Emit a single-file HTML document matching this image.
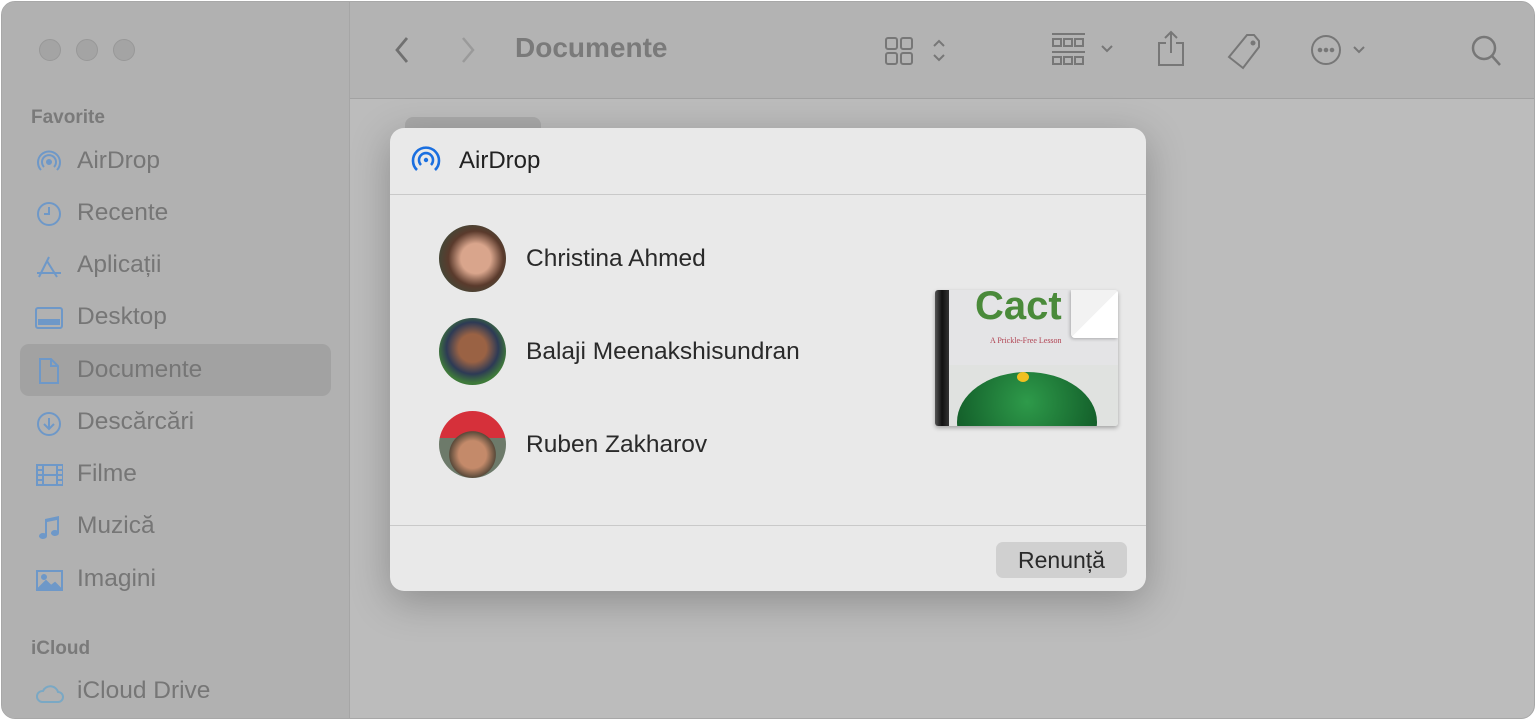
<!DOCTYPE html>
<html><head><meta charset="utf-8"><style>
*{margin:0;padding:0;box-sizing:border-box}
body{width:1536px;height:720px;background:#fff;font-family:"Liberation Sans",sans-serif;position:relative;overflow:hidden}
.win{position:absolute;left:1px;top:1px;width:1534px;height:718px;border-radius:14px;background:#bcbcbc;overflow:hidden;border:1px solid #a8a8a8}
.side{position:absolute;left:0;top:0;width:348px;height:100%;background:#b1b1b1;border-right:1px solid #a6a6a6}
.tb{position:absolute;left:348px;top:0;right:0;height:97px;background:#b3b3b3;border-bottom:1px solid #a2a2a2}
.dot{position:absolute;top:37px;width:22px;height:22px;border-radius:50%;background:#a4a4a4;border:1px solid #989898}
.sh{position:absolute;left:29px;font-size:19px;font-weight:bold;color:#7a7a7a}
.it{position:absolute;left:75px;font-size:24.5px;color:#767676}
.ic{position:absolute;left:33px}
.sel{position:absolute;left:18px;top:342px;width:311px;height:52px;border-radius:9px;background:#a2a2a2}
.dlg{position:absolute;left:390px;top:128px;width:756px;height:463px;background:#e9e9e9;border-radius:14px;box-shadow:0 10px 40px rgba(0,0,0,.25)}
.nm{position:absolute;left:136px;font-size:24.5px;color:#2a2a2a}
.av{position:absolute;left:49px;width:67px;height:67px;border-radius:50%}
</style></head><body>
<div class="win">
<div class="side">
<div class="dot" style="left:37px"></div><div class="dot" style="left:74px"></div><div class="dot" style="left:111px"></div>
<div class="sh" style="top:105px">Favorite</div>
<div class="sel"></div>
<svg class="ic" style="top:146px" width="28" height="28" viewBox="0 0 28 28" fill="none" stroke="#6e98c8" stroke-width="2"><circle cx="14" cy="14" r="2" fill="#6e98c8"/><path d="M9 19a7 7 0 1 1 10 0M6 22a11 11 0 1 1 16 0"/></svg>
<div class="it" style="top:145px">AirDrop</div>
<svg class="ic" style="top:198px" width="28" height="28" viewBox="0 0 28 28" fill="none" stroke="#6e98c8" stroke-width="2"><circle cx="14" cy="14" r="11"/><path d="M14 7v7h-5"/></svg>
<div class="it" style="top:197px">Recente</div>
<svg class="ic" style="top:251px" width="28" height="28" viewBox="0 0 28 28" fill="none" stroke="#6e98c8" stroke-width="2"><path d="M14 4l-10 20M12 8l10 16M2 20h24"/></svg>
<div class="it" style="top:249px">Aplicații</div>
<svg class="ic" style="top:303px" width="28" height="28" viewBox="0 0 28 28" fill="none" stroke="#6e98c8" stroke-width="2"><rect x="1" y="3" width="26" height="20" rx="2"/><rect x="4" y="15" width="20" height="4" fill="#6e98c8"/></svg>
<div class="it" style="top:301px">Desktop</div>
<svg class="ic" style="top:355px" width="28" height="28" viewBox="0 0 28 28" fill="none" stroke="#6e98c8" stroke-width="2"><path d="M5 2h11l7 7v17H5zM16 2v7h7"/></svg>
<div class="it" style="top:354px">Documente</div>
<svg class="ic" style="top:408px" width="28" height="28" viewBox="0 0 28 28" fill="none" stroke="#6e98c8" stroke-width="2"><circle cx="14" cy="14" r="11"/><path d="M14 8v11M9 14l5 5 5-5"/></svg>
<div class="it" style="top:406px">Descărcări</div>
<svg class="ic" style="top:460px" width="28" height="28" viewBox="0 0 28 28" fill="none" stroke="#6e98c8" stroke-width="2"><rect x="2" y="3" width="26" height="20"/><path d="M8 3v20M22 3v20M8 13h14M2 8h6M2 13h6M2 18h6M22 8h6M22 13h6M22 18h6"/></svg>
<div class="it" style="top:458px">Filme</div>
<svg class="ic" style="top:512px" width="28" height="28" viewBox="0 0 28 28" fill="#6e98c8"><path d="M10 5l14-3v17a4 3 0 1 1-2-2.6V6l-10 2v14a4 3 0 1 1-2-2.6z"/></svg>
<div class="it" style="top:510px">Muzică</div>
<svg class="ic" style="top:565px" width="28" height="28" viewBox="0 0 28 28" fill="none" stroke="#6e98c8" stroke-width="2"><rect x="2" y="4" width="25" height="19"/><path d="M3 22l8-8 5 5 4-3 6 6z" fill="#6e98c8"/><circle cx="9" cy="10" r="2" fill="#6e98c8"/></svg>
<div class="it" style="top:563px">Imagini</div>
<div class="sh" style="top:636px">iCloud</div>
<svg class="ic" style="top:680px" width="30" height="24" viewBox="0 0 30 24" fill="none" stroke="#7aa8c4" stroke-width="2"><path d="M7 20h16a5 5 0 0 0 0-10 8 8 0 0 0-15-1A5.5 5.5 0 0 0 7 20z"/></svg>
<div class="it" style="top:675px">iCloud Drive</div>
</div>
<div class="tb">
<svg style="position:absolute;left:42px;top:34px" width="20" height="28" viewBox="0 0 20 28" fill="none" stroke="#707070" stroke-width="2.8"><path d="M15 2L5 14l10 12"/></svg>
<svg style="position:absolute;left:108px;top:34px" width="20" height="28" viewBox="0 0 20 28" fill="none" stroke="#9a9a9a" stroke-width="2.5"><path d="M5 2l10 12L5 26"/></svg>
<div style="position:absolute;left:165px;top:30px;font-size:28px;font-weight:bold;color:#7a7a7a">Documente</div>
<svg style="position:absolute;left:534px;top:34px" width="72" height="30" viewBox="0 0 72 30" fill="none" stroke="#777" stroke-width="2"><rect x="2" y="2" width="11" height="11" rx="2"/><rect x="17" y="2" width="11" height="11" rx="2"/><rect x="2" y="17" width="11" height="11" rx="2"/><rect x="17" y="17" width="11" height="11" rx="2"/><path d="M50 10l5-5 5 5M50 19l5 5 5-5"/></svg>
<svg style="position:absolute;left:700px;top:30px" width="70" height="36" viewBox="0 0 70 36" fill="none" stroke="#777" stroke-width="2"><path d="M2 2h33M2 20h33"/><rect x="3" y="7" width="8" height="7"/><rect x="14" y="7" width="8" height="7"/><rect x="25" y="7" width="8" height="7"/><rect x="3" y="25" width="8" height="7"/><rect x="14" y="25" width="8" height="7"/><rect x="25" y="25" width="8" height="7"/><path d="M52 14l5 5 5-5"/></svg>
<svg style="position:absolute;left:806px;top:27px" width="30" height="38" viewBox="0 0 30 38" fill="none" stroke="#777" stroke-width="2"><path d="M15 24V3M9 9l6-6 6 6M10 14H3v22h24V14h-7"/></svg>
<svg style="position:absolute;left:877px;top:30px" width="40" height="40" viewBox="0 0 40 40" fill="none" stroke="#777" stroke-width="2"><path d="M20 3h7l5 6v6L16 36l-14-11z"/><circle cx="26" cy="11" r="1.5" fill="#777"/></svg>
<svg style="position:absolute;left:960px;top:32px" width="62" height="32" viewBox="0 0 62 32" fill="none" stroke="#777" stroke-width="2"><circle cx="16" cy="16" r="14"/><circle cx="10" cy="16" r="1.3" fill="#777"/><circle cx="16" cy="16" r="1.3" fill="#777"/><circle cx="22" cy="16" r="1.3" fill="#777"/><path d="M44 13l5 5 5-5"/></svg>
<svg style="position:absolute;left:1120px;top:32px" width="34" height="34" viewBox="0 0 34 34" fill="none" stroke="#777" stroke-width="2.5"><circle cx="14" cy="14" r="11"/><path d="M22 22l8 9"/></svg>
</div>
<div style="position:absolute;left:403px;top:115px;width:136px;height:20px;border-radius:8px;background:#a9a9a9"></div>
</div>
<div class="dlg">
<svg style="position:absolute;left:20px;top:17px" width="33" height="32" viewBox="0 0 33 32" fill="none" stroke="#1a6fe0" stroke-width="2.6"><circle cx="16" cy="15" r="2.2" fill="#1a6fe0" stroke="none"/><path d="M11 20a7 7 0 1 1 10 0M7 25a13 13 0 1 1 18 0"/></svg>
<div style="position:absolute;left:69px;top:19px;font-size:24px;color:#222">AirDrop</div>
<div style="position:absolute;left:0;right:0;top:66px;border-top:1px solid #c9c9c9"></div>
<div class="av" style="top:97px;background:radial-gradient(circle at 55% 50%,#d9a58c 0 30%,#5a3a2c 55%,#3f4a3a 80%)"></div>
<div class="nm" style="top:117px">Christina Ahmed</div>
<div class="av" style="top:190px;background:radial-gradient(circle at 50% 45%,#9a6244 0 28%,#2d3a55 52%,#3f7a3a 70%,#2f6a2f)"></div>
<div class="nm" style="top:210px">Balaji Meenakshisundran</div>
<div class="av" style="top:283px;background:radial-gradient(circle at 50% 65%,#c48a6a 0 25%,#5a4a3a 42%,transparent 43%),linear-gradient(#d6303a 0 40%,#6d7a6a 40%)"></div>
<div class="nm" style="top:303px">Ruben Zakharov</div>
<div style="position:absolute;left:545px;top:162px;width:183px;height:136px;border-radius:3px;background:linear-gradient(to bottom,#e4e4e6 0 55%,#e0e2e0 55%);box-shadow:0 2px 4px rgba(0,0,0,.3);overflow:hidden">
<div style="position:absolute;left:0;top:0;width:14px;height:100%;background:linear-gradient(90deg,#555,#111,#333)"></div>
<div style="position:absolute;left:40px;top:-6px;font:bold 40px 'Liberation Sans',sans-serif;color:#4a8a3a">Cact</div>
<div style="position:absolute;left:55px;top:46px;font:8px 'Liberation Serif',serif;color:#b04050">A Prickle-Free Lesson</div>
<div style="position:absolute;left:22px;top:82px;width:140px;height:100px;border-radius:50%;background:radial-gradient(circle at 50% 30%,#2e9a4a,#186a30 60%,#0f4a20)"></div>
<div style="position:absolute;left:82px;top:82px;width:12px;height:10px;background:#f0c020;border-radius:50%"></div>
<div style="position:absolute;right:0;top:0;width:47px;height:48px;background:linear-gradient(135deg,#f2f2f2 50%,#fff 50%);box-shadow:-1px 1px 3px rgba(0,0,0,.25);border-bottom-left-radius:4px"></div>
</div>
<div style="position:absolute;left:0;right:0;top:397px;border-top:1px solid #c9c9c9"></div>
<div style="position:absolute;left:606px;top:414px;width:131px;height:36px;border-radius:7px;background:#d0d0d0;font-size:23px;color:#2a2a2a;text-align:center;line-height:36px">Renunță</div>
</div>
</body></html>
